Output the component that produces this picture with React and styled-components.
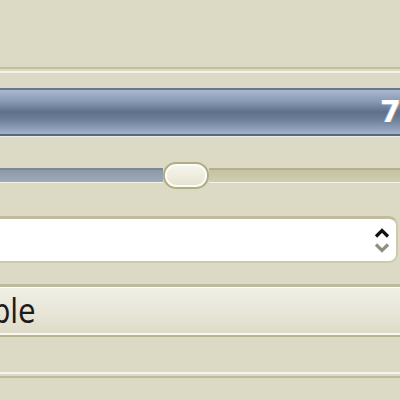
import styled, { createGlobalStyle } from "styled-components";

const Global = createGlobalStyle`
  html, body {
    margin: 0;
    padding: 0;
    width: 400px;
    height: 400px;
    overflow: hidden;
    background: #dcdac5;
  }
  body {
    font-family: "DejaVu Sans", "Liberation Sans", sans-serif;
  }
`;

// the screenshot is a crop of a wider window, so the column starts left of the viewport
const Window = styled.div`
  display: flex;
  flex-direction: column;
  width: 912px;
  margin-left: -40px;
  padding-top: 67px;
`;

// etched line pair, order flips for raised/sunken
const Etched = styled.div`
  height: 2px;
  margin-top: ${(p) => p.$top || 0}px;
  background: ${(p) => (p.$raised ? "#f6f5ec" : "#c2bf9f")};
  border-bottom: 2px solid #dcdac5;
  box-shadow: 0 2px 0 ${(p) => (p.$raised ? "#bfbb99" : "#f4f3e9")};
`;

const Progress = styled.div`
  margin-top: 17px;
  height: 44px;
  border-top: 2px solid #66768e;
  border-bottom: 2px solid #5b6a80;
  background: linear-gradient(
    to bottom,
    #a9b8cf 0%,
    #8a9bb5 25%,
    #5f7189 50%,
    #6e809a 68%,
    #a2b3cb 100%
  );
  box-shadow: 0 1px 0 #eeede2;
  display: flex;
  align-items: center;
  justify-content: center;
`;

const ProgressText = styled.span`
  font-family: "DejaVu Sans", sans-serif;
  font-weight: bold;
  font-size: 30px;
  line-height: 1;
  color: #ffffff;
  text-shadow: -1px 0 0 rgba(120, 200, 255, 0.5), 1px 0 0 rgba(255, 190, 150, 0.45);
`;

const SliderRow = styled.div`
  margin-top: 26px;
  height: 27px;
  display: flex;
  align-items: center;
`;

const Trough = styled.div`
  height: 12px;
  margin-top: -1px;
  flex: ${(p) => (p.$filled ? `0 0 ${p.$w}px` : "1")};
  border-top: 2px solid ${(p) => (p.$filled ? "#7c8896" : "#b3b08c")};
  border-bottom: 1px solid #f3f2e8;
  background: ${(p) =>
    p.$filled
      ? "linear-gradient(to bottom, #8c99a8, #9eaab7)"
      : "linear-gradient(to bottom, #c5c3a1, #cfcdb0)"};
`;

const Thumb = styled.div`
  flex: 0 0 46px;
  height: 27px;
  box-sizing: border-box;
  border: 2px solid #b0ad86;
  border-radius: 13px;
  box-shadow: inset 0 0 0 2px #fdfdf8;
  background: linear-gradient(to bottom, #f7f6ee 0%, #efede0 50%, #e3e1cb 100%);
`;

const EntryRow = styled.div`
  margin-top: 27px;
  display: flex;
`;

const SpinEntry = styled.div`
  flex: 0 0 438px;
  height: 47px;
  box-sizing: border-box;
  background: #ffffff;
  border: 2px solid #cdcab0;
  border-top: 3px solid #c0bd9f;
  border-radius: 0 9px 9px 0;
  display: flex;
  justify-content: flex-end;
  align-items: center;
  padding-right: 6px;
`;

const Arrows = styled.div`
  display: flex;
  flex-direction: column;
  gap: 5px;
`;

const Chevron = ({ up, color }) => (
  <svg width="16" height="10" viewBox="0 0 16 10">
    <path
      d={up ? "M2 8.5 L8 2.5 L14 8.5" : "M2 1.5 L8 7.5 L14 1.5"}
      fill="none"
      stroke={color}
      strokeWidth="3.2"
    />
  </svg>
);

const Button = styled.div`
  margin-top: 21px;
  height: 53px;
  box-sizing: border-box;
  border-top: 3px solid #bebb9c;
  border-bottom: 2px solid #b7b493;
  box-shadow: inset 0 1px 0 #ffffff, inset 0 -2px 0 #f9f8f0;
  background: linear-gradient(to bottom, #f1f0e7 0%, #e8e6d8 50%, #dddac6 100%);
  display: flex;
  align-items: center;
`;

// label ends at a fixed spot; it overflows to the left
const LabelBox = styled.div`
  flex: 0 0 75px;
  min-width: 0;
  display: flex;
  justify-content: flex-end;
`;

const Label = styled.span`
  flex: none;
  font-family: "DejaVu Sans", sans-serif;
  font-size: 33px;
  line-height: 1;
  color: #1c1a1a;
  white-space: nowrap;
  transform: scaleX(0.85);
  transform-origin: right center;
`;

export default function App() {
  const sliderPos = 203;
  return (
    <>
      <Global />
      <Window>
        <Etched />
        <Progress>
          <ProgressText>70%</ProgressText>
        </Progress>
        <SliderRow>
          <Trough $filled $w={sliderPos} />
          <Thumb />
          <Trough />
        </SliderRow>
        <EntryRow>
          <SpinEntry>
            <Arrows>
              <Chevron up color="#111111" />
              <Chevron color="#908f80" />
            </Arrows>
          </SpinEntry>
        </EntryRow>
        <Button>
          <LabelBox>
            <Label>Disable</Label>
          </LabelBox>
        </Button>
        <Etched $raised $top={35} />
      </Window>
    </>
  );
}
